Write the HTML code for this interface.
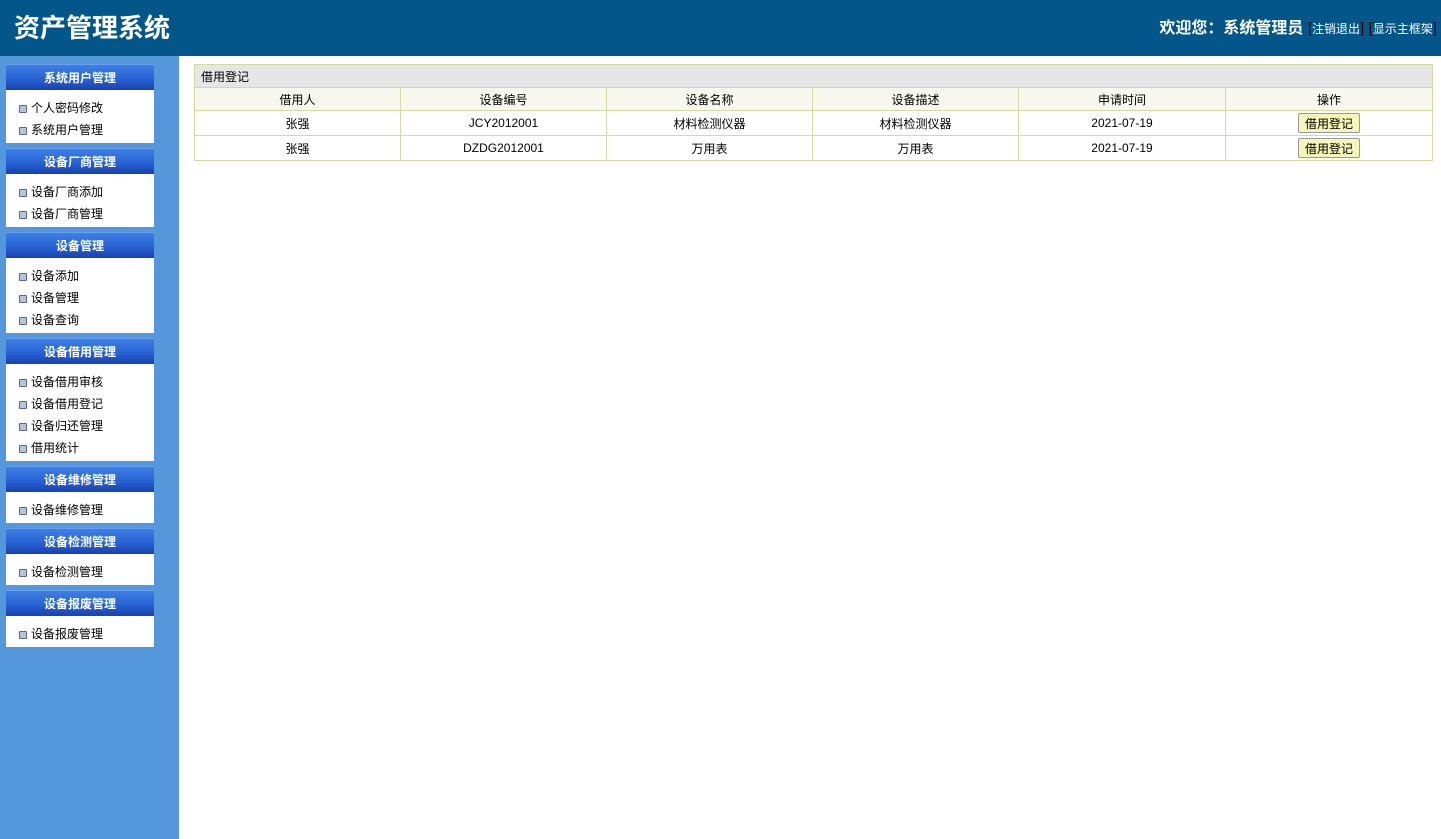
<!DOCTYPE html>
<html><head><meta charset="utf-8"><style>
*{margin:0;padding:0;box-sizing:border-box}
body{width:1441px;height:839px;overflow:hidden;font-family:"Liberation Sans","Microsoft YaHei","Noto Sans CJK SC",sans-serif;font-size:12px;color:#000;background:#fff;position:relative}
#top{position:absolute;left:0;top:0;width:1441px;height:56px;background:#02568a}
#logo{position:absolute;left:14px;top:8px;color:#fff;font-size:26px;font-weight:bold;letter-spacing:0px}
#wel{position:absolute;right:4px;top:14px;color:#fff;font-size:16px;font-weight:bold;white-space:nowrap}
#wel span{font-size:12px;font-weight:normal;color:#fff}
#wel b{color:#000;font-weight:normal;font-size:15px}
#side{position:absolute;left:0;top:56px;width:179px;height:783px;background:#5597db}
.blk{position:absolute;left:6px;width:148px}
.hd{height:26px;background:linear-gradient(#3e7fe6,#2a66d6 50%,#1741b0);color:#fff;font-weight:bold;text-align:center;line-height:26px;font-size:12px;border-top:1px solid #6aa0f0}
.bd{background:#fff;padding:7px 0 2px 0}
.it{height:22px;line-height:22px;padding-left:25px;position:relative;font-size:12px}
.it:before{content:"";position:absolute;left:13px;top:8px;width:6px;height:6px;border:1px solid #667;background:#b0c4e4;border-radius:1px}
table{position:absolute;left:194px;top:64px;width:1239px;border-collapse:collapse;font-size:12px}
td{border:1px solid #d3dba0;text-align:center}
.t td{background:#e6e6e6;text-align:left;padding-left:6px;height:23px}
.h td{background:#f8f8ee;height:23px}
.r td{height:25px}
button{font-family:inherit;font-size:12px;background:#f6f6b8;border:1px solid #999;border-radius:2px;padding:0 6px;height:20px}
</style></head><body>
<div id="top"><div id="logo">资产管理系统</div>
<div id="wel">欢迎您：系统管理员 <b>[</b><span>注销退出</span><b>]</b> <b>[</b><span>显示主框架</span><b>]</b></div></div>
<div id="side">
<div class="blk" style="top:8px"><div class="hd">系统用户管理</div><div class="bd"><div class="it">个人密码修改</div><div class="it">系统用户管理</div></div></div>
<div class="blk" style="top:92px"><div class="hd">设备厂商管理</div><div class="bd"><div class="it">设备厂商添加</div><div class="it">设备厂商管理</div></div></div>
<div class="blk" style="top:176px"><div class="hd">设备管理</div><div class="bd"><div class="it">设备添加</div><div class="it">设备管理</div><div class="it">设备查询</div></div></div>
<div class="blk" style="top:282px"><div class="hd">设备借用管理</div><div class="bd"><div class="it">设备借用审核</div><div class="it">设备借用登记</div><div class="it">设备归还管理</div><div class="it">借用统计</div></div></div>
<div class="blk" style="top:410px"><div class="hd">设备维修管理</div><div class="bd"><div class="it">设备维修管理</div></div></div>
<div class="blk" style="top:472px"><div class="hd">设备检测管理</div><div class="bd"><div class="it">设备检测管理</div></div></div>
<div class="blk" style="top:534px"><div class="hd">设备报废管理</div><div class="bd"><div class="it">设备报废管理</div></div></div>
</div>
<table>
<tr class="t"><td colspan="6">借用登记</td></tr>
<tr class="h"><td style="width:206px">借用人</td><td style="width:206px">设备编号</td><td style="width:206px">设备名称</td><td style="width:206px">设备描述</td><td style="width:207px">申请时间</td><td>操作</td></tr>
<tr class="r"><td>张强</td><td>JCY2012001</td><td>材料检测仪器</td><td>材料检测仪器</td><td>2021-07-19</td><td><button>借用登记</button></td></tr>
<tr class="r"><td>张强</td><td>DZDG2012001</td><td>万用表</td><td>万用表</td><td>2021-07-19</td><td><button>借用登记</button></td></tr>
</table>
</body></html>
